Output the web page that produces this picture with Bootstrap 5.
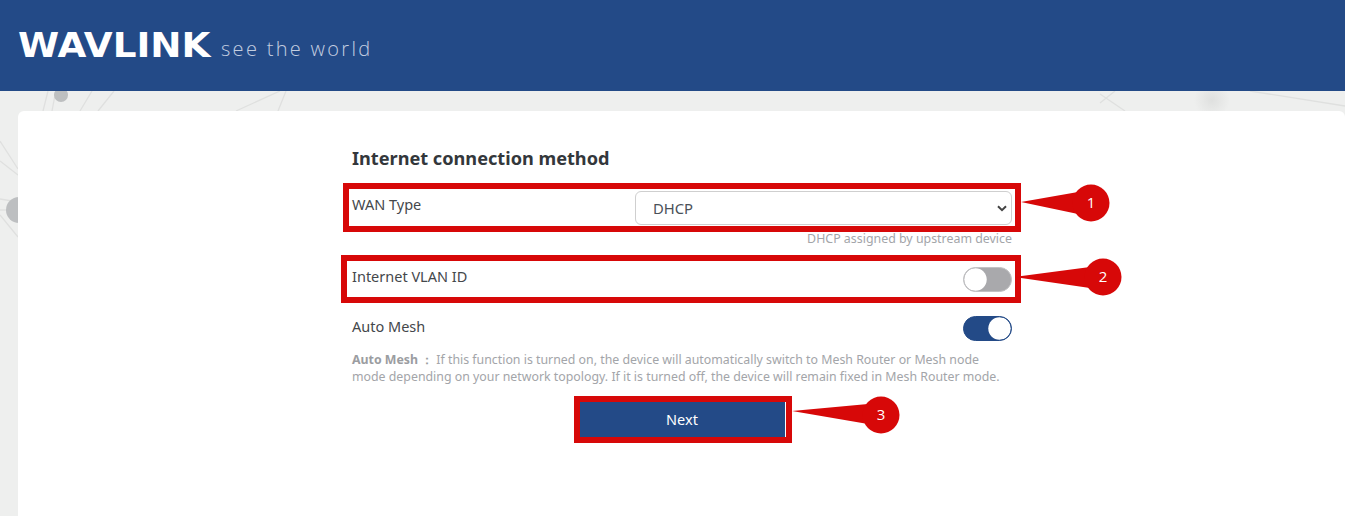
<!DOCTYPE html>
<html lang="en">
<head>
  <meta charset="UTF-8" />
  <meta name="viewport" content="width=device-width, initial-scale=1.0"/>
  <title>Internet connection method</title>
  <link href="https://cdn.jsdelivr.net/npm/bootstrap@5.3.3/dist/css/bootstrap.min.css" rel="stylesheet">
  <style>
    html, body { height: 100%; }
    body {
      font-family: "Noto Sans", "Open Sans", sans-serif;
      background-color: #eeefee;
      color: #3f4246;
      overflow: hidden;
      position: relative;
    }
    .top-bar { height: 91px; background-color: #234a87; padding: 28px 0 0 18px; flex-shrink: 0; }
    .logo-word {
      font-family: "DejaVu Sans", sans-serif;
      font-weight: 700;
      font-size: 33px;
      line-height: 36px;
      color: #fff;
      width: 191px;
      flex-shrink: 0;
      white-space: nowrap;
      transform: scaleX(1.13);
      transform-origin: left center;
    }
    .slogan {
      font-family: "Open Sans", sans-serif;
      font-weight: 300;
      font-size: 20px;
      line-height: 26px;
      letter-spacing: 2.3px;
      color: #c3cee0;
      margin: 8px 0 0 12px;
    }
    .bg-net { position: absolute; left: 0; top: 91px; z-index: 0; }
    .page-body { position: relative; z-index: 1; padding: 20px 0 0 18px; height: 425px; }
    .white-panel { background-color: #fff; border-radius: 6px 6px 0 0; height: 100%; padding-top: 35px; }
    .form-col { width: 660px; margin-left: 334px; }
    .form-title { font-size: 18.15px; font-weight: 700; line-height: 24px; color: #33373b; margin-bottom: 21px; }
    .field-label { font-size: 14.5px; line-height: 20px; color: #44474b; }
    .wan-label { margin-top: -8px; }
    .vlan-label { margin-top: -7px; }
    .mesh-label { margin-top: -5px; }
    .wan-row { height: 34px; margin-bottom: 6px; }
    .wan-select {
      width: 377px;
      height: 34px;
      min-height: 0;
      font-size: 14.8px;
      color: #4a5058;
      padding: 0 30px 0 17px;
      border-color: #cfcfcf;
      background-image: url("data:image/svg+xml,%3csvg xmlns='http://www.w3.org/2000/svg' viewBox='0 0 10 7'%3e%3cpath d='M1 1.2 L5 5.2 L9 1.2' fill='none' stroke='%23444' stroke-width='2'/%3e%3c/svg%3e");
      background-size: 10px 7px;
      background-position: right 4px center;
    }
    .hint-text { font-size: 12.4px; line-height: 16px; color: #a3a5a9; text-align: right; margin-bottom: 20px; }
    .switch-row { height: 25px; }
    .form-switch.plain-switch { padding-left: 0; margin: 0; min-height: 0; display: flex; }
    .form-switch.plain-switch .form-check-input {
      width: 49px;
      height: 25px;
      margin: 0;
      float: none;
      background-color: #a9a9ac;
      border: 1.5px solid #c2c2c4;
      background-image: url("data:image/svg+xml,%3csvg xmlns='http://www.w3.org/2000/svg' viewBox='-4 -4 8 8'%3e%3ccircle r='3.9' fill='%23fff'/%3e%3c/svg%3e");
      box-shadow: none;
    }
    .form-switch.plain-switch .form-check-input:checked {
      background-color: #234a87;
      border-color: #234a87;
    }
    .help-text { font-size: 12.35px; line-height: 17px; color: #a3a5a9; margin-top: 10px; margin-bottom: 0; white-space: nowrap; }
    .help-text b { font-weight: 700; color: #9b9da1; margin-right: 3px; }
    .next-btn {
      width: 206px;
      height: 35px;
      padding: 0;
      font-size: 14.5px;
      color: #fff;
      background-color: #234a87;
      border: 0;
      border-radius: 0;
    }
    .next-btn:hover { background-color: #234a87; color: #fff; }
    .btn-wrap { margin-top: 17px; }
    .marks { position: absolute; left: 0; top: 0; z-index: 2; pointer-events: none; }
    .marks text { font-family: "Open Sans", sans-serif; font-size: 15px; fill: #fff; text-anchor: middle; }
  </style>
</head>
<body>

  <!-- Header -->
  <div class="top-bar d-flex align-items-start">
    <div class="logo-word">WAVLINK</div>
    <div class="slogan">see the world</div>
  </div>

  <!-- Background network decoration -->
  <svg class="bg-net" width="1345" height="425" viewBox="0 0 1345 425">
    <defs>
      <radialGradient id="softDot">
        <stop offset="0" stop-color="#dfe0df"/>
        <stop offset="1" stop-color="#eeefee"/>
      </radialGradient>
    </defs>
    <g stroke="#dfe0df" stroke-width="1.3" fill="none">
      <path d="M48 0 L43 20"/>
      <path d="M55 4 L52 20"/>
      <path d="M92 0 L80 20"/>
      <path d="M114 0 L98 20"/>
      <path d="M280 0 L236 20"/>
      <path d="M286 0 L278 20"/>
      <path d="M0 50 L18 78"/>
      <path d="M0 70 L18 84"/>
      <path d="M0 108 L18 111"/>
      <path d="M0 124 L18 146"/>
      <path d="M0 119 L18 119"/>
      <path d="M1100 3 L1125 20"/>
      <path d="M1115 0 L1100 12"/>
      <path d="M1250 0 L1345 15"/>
    </g>
    <circle cx="61" cy="4" r="7" fill="#bdbfc0"/>
    <circle cx="19" cy="119" r="13" fill="#bdbfc1"/>
    <circle cx="1212" cy="9" r="18" fill="url(#softDot)"/>
  </svg>

  <!-- Main Content -->
  <div class="page-body">
    <div class="white-panel">
      <div class="form-col">
        <div class="form-title">Internet connection method</div>

        <div class="wan-row d-flex justify-content-between align-items-center">
          <div class="field-label wan-label">WAN Type</div>
          <select class="form-select wan-select">
            <option>DHCP</option>
          </select>
        </div>
        <div class="hint-text">DHCP assigned by upstream device</div>

        <div class="switch-row d-flex justify-content-between align-items-center mb-4">
          <div class="field-label vlan-label">Internet VLAN ID</div>
          <div class="form-check form-switch plain-switch">
            <input class="form-check-input" type="checkbox" role="switch">
          </div>
        </div>

        <div class="switch-row d-flex justify-content-between align-items-center">
          <div class="field-label mesh-label">Auto Mesh</div>
          <div class="form-check form-switch plain-switch">
            <input class="form-check-input" type="checkbox" role="switch" checked>
          </div>
        </div>
        <p class="help-text"><b>Auto Mesh ：</b>If this function is turned on, the device will automatically switch to Mesh Router or Mesh node<br>mode depending on your network topology. If it is turned off, the device will remain fixed in Mesh Router mode.</p>

        <div class="btn-wrap text-center">
          <button type="button" class="btn next-btn">Next</button>
        </div>
      </div>
    </div>
  </div>

  <!-- Red callouts over the page -->
  <svg class="marks" width="1345" height="516" viewBox="0 0 1345 516">
    <g fill="none" stroke="#d70808" stroke-width="6">
      <rect x="346" y="186" width="672" height="43"/>
      <rect x="344" y="258" width="674" height="42"/>
      <rect x="577" y="399" width="212" height="41"/>
    </g>
    <g fill="#d70808">
      <path d="M1021 202 L1078 192 L1078 214 Z"/>
      <circle cx="1091" cy="203" r="18.5"/>
      <path d="M1015 277 L1090 267 L1090 288 Z"/>
      <circle cx="1103" cy="277" r="18.5"/>
      <path d="M792 411 L868 404 L868 424 Z"/>
      <circle cx="881" cy="415" r="18.5"/>
    </g>
    <text x="1091" y="208">1</text>
    <text x="1103" y="282">2</text>
    <text x="881" y="420">3</text>
  </svg>

</body>
</html>
